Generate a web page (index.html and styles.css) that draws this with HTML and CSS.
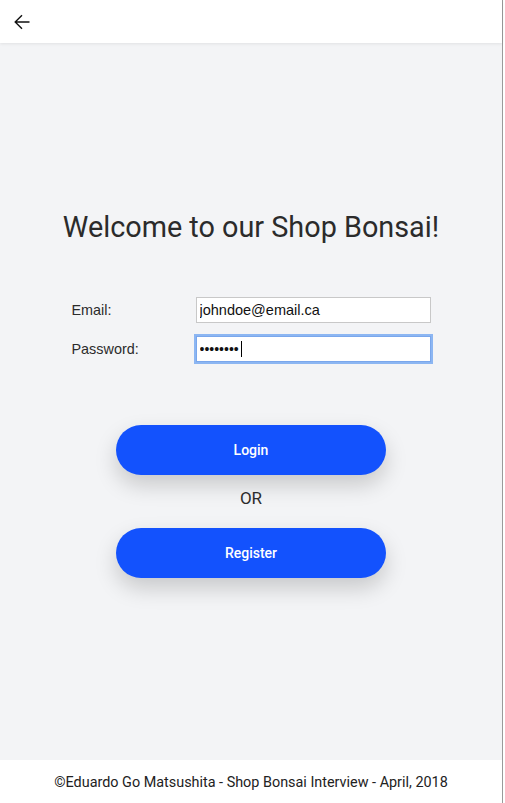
FILE: index.html
```html
<!DOCTYPE html>
<html>
<head>
<meta charset="utf-8">
<link rel="stylesheet" href="styles.css">
</head>
<body>
<div class="app">
  <header class="header">
    <button class="back" aria-label="Back">
      <svg width="16" height="16" viewBox="0 0 16 16"><path d="M15.5 8H1.2M8 1.2L1.2 8L8 14.8" fill="none" stroke="#111" stroke-width="1.4"/></svg>
    </button>
  </header>
  <main class="main">
    <h1 class="title">Welcome to our Shop Bonsai!</h1>
    <form class="form">
      <label class="label" for="email">Email:</label>
      <input class="input" id="email" type="text" value="johndoe@email.ca">
      <label class="label" for="pw">Password:</label>
      <div class="pw-wrap">
        <input class="input input-focus" id="pw" type="password" value="12345678">
        <span class="caret"></span>
      </div>
    </form>
    <div class="actions">
      <button class="btn">Login</button>
      <div class="or">OR</div>
      <button class="btn">Register</button>
    </div>
  </main>
  <footer class="footer">©Eduardo Go Matsushita - Shop Bonsai Interview - April, 2018</footer>
</div>
</body>
</html>
```
FILE: styles.css
```css
html, body {
  margin: 0;
  padding: 0;
  background: #ffffff;
}
body {
  font-family: Roboto, "Liberation Sans", sans-serif;
  color: #2b2b2b;
}
.app {
  width: 502px;
  height: 803px;
  border-right: 1px solid #9a9a9a;
  display: flex;
  flex-direction: column;
  background: #f3f4f6;
}
.header {
  height: 43px;
  flex: none;
  background: #ffffff;
  box-shadow: 0 1px 3px rgba(0,0,0,0.08);
  display: flex;
  align-items: center;
  position: relative;
  z-index: 1;
}
.back {
  border: 0;
  background: none;
  padding: 0;
  margin-left: 14px;
  margin-top: 1px;
  width: 16px;
  height: 16px;
  display: flex;
}
.main {
  flex: 1;
  display: flex;
  flex-direction: column;
  align-items: center;
}
.title {
  margin: 168px 0 0;
  font-size: 28.8px;
  font-weight: 400;
  line-height: 33px;
  color: #2b2b2b;
}
.form {
  margin-top: 53px;
  display: grid;
  grid-template-columns: 124px 235px;
  row-gap: 13px;
  align-items: center;
}
.label {
  font-family: "Liberation Sans", Arial, sans-serif;
  font-size: 14.4px;
  color: #2b2b2b;
}
.input {
  box-sizing: border-box;
  width: 235px;
  height: 26px;
  border: 1px solid #c8c8c8;
  background: #ffffff;
  padding: 0 3px;
  font-family: "Liberation Sans", Arial, sans-serif;
  font-size: 14.5px;
  color: #111;
  outline: none;
  margin: 0;
}
.pw-wrap {
  position: relative;
  width: 235px;
  height: 26px;
}
.input-focus {
  border-color: #7aa7ec;
  box-shadow: 0 0 0 2px #8cb6f2;
  font-size: 14px;
  letter-spacing: 0;
}
.caret {
  position: absolute;
  left: 45px;
  top: 5px;
  width: 1px;
  height: 16px;
  background: #000;
}
.actions {
  margin-top: 63px;
  display: flex;
  flex-direction: column;
  align-items: center;
}
.btn {
  width: 270px;
  height: 50px;
  border: 0;
  border-radius: 25px;
  background: #1352fd;
  color: #ffffff;
  font-family: Roboto, "Liberation Sans", sans-serif;
  font-size: 14px;
  font-weight: 500;
  box-shadow: 0 10px 22px rgba(0,0,0,0.18);
}
.or {
  height: 53px;
  line-height: 46px;
  font-size: 17px;
  color: #2b2b2b;
}
.footer {
  height: 43px;
  flex: none;
  background: #ffffff;
  display: flex;
  align-items: center;
  justify-content: center;
  font-size: 14.4px;
  color: #222;
  padding-top: 1px;
  box-sizing: border-box;
}
```
